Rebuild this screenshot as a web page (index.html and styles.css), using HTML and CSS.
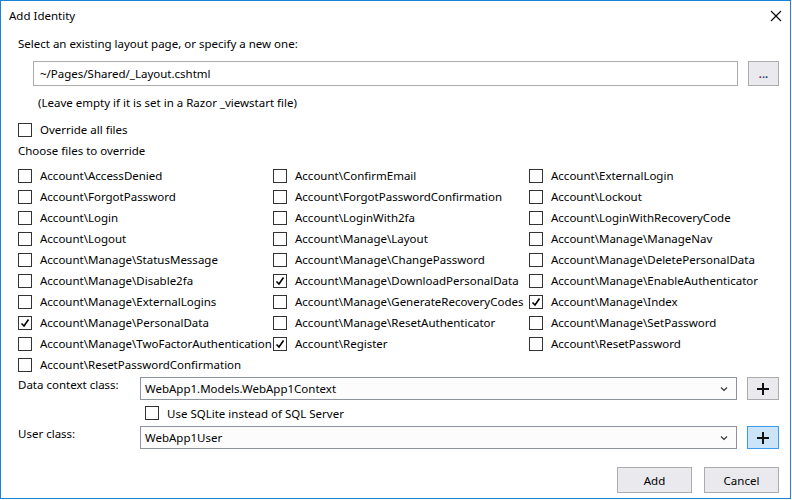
FILE: index.html
```html
<!DOCTYPE html>
<html>
<head>
<meta charset="utf-8">
<link rel="stylesheet" href="styles.css">
</head>
<body>
<div class="window">
  <div class="titlebar">
    <span class="title">Add Identity</span>
    <span class="close"><svg width="12" height="12" viewBox="0 0 12 12"><path d="M1 1 L11 11 M11 1 L1 11" stroke="#000" stroke-width="1.1" fill="none"/></svg></span>
  </div>
  <div class="content">
    <div class="label-line first">Select an existing layout page, or specify a new one:</div>
    <div class="layout-row">
      <div class="textbox">~/Pages/Shared/_Layout.cshtml</div>
      <div class="btn dots"><span class="d1">.</span><span class="d2">.</span><span class="d3">.</span></div>
    </div>
    <div class="hint">(Leave empty if it is set in a Razor _viewstart file)</div>
    <div class="check row21"><span class="box"></span><span class="ctext">Override all files</span></div>
    <div class="label-line row21">Choose files to override</div>
    <div class="grid">
      <div class="check"><span class="box"></span><span class="ctext">Account\AccessDenied</span></div>
      <div class="check"><span class="box"></span><span class="ctext">Account\ConfirmEmail</span></div>
      <div class="check"><span class="box"></span><span class="ctext">Account\ExternalLogin</span></div>
      <div class="check"><span class="box"></span><span class="ctext">Account\ForgotPassword</span></div>
      <div class="check"><span class="box"></span><span class="ctext">Account\ForgotPasswordConfirmation</span></div>
      <div class="check"><span class="box"></span><span class="ctext">Account\Lockout</span></div>
      <div class="check"><span class="box"></span><span class="ctext">Account\Login</span></div>
      <div class="check"><span class="box"></span><span class="ctext">Account\LoginWith2fa</span></div>
      <div class="check"><span class="box"></span><span class="ctext">Account\LoginWithRecoveryCode</span></div>
      <div class="check"><span class="box"></span><span class="ctext">Account\Logout</span></div>
      <div class="check"><span class="box"></span><span class="ctext">Account\Manage\Layout</span></div>
      <div class="check"><span class="box"></span><span class="ctext">Account\Manage\ManageNav</span></div>
      <div class="check"><span class="box"></span><span class="ctext">Account\Manage\StatusMessage</span></div>
      <div class="check"><span class="box"></span><span class="ctext">Account\Manage\ChangePassword</span></div>
      <div class="check"><span class="box"></span><span class="ctext">Account\Manage\DeletePersonalData</span></div>
      <div class="check"><span class="box"></span><span class="ctext">Account\Manage\Disable2fa</span></div>
      <div class="check"><span class="box checked"><svg width="12" height="12" viewBox="0 0 12 12"><path d="M2.5 6.5 L5 9 L9.5 2.5" stroke="#000" stroke-width="1.6" fill="none"/></svg></span><span class="ctext">Account\Manage\DownloadPersonalData</span></div>
      <div class="check"><span class="box"></span><span class="ctext">Account\Manage\EnableAuthenticator</span></div>
      <div class="check"><span class="box"></span><span class="ctext">Account\Manage\ExternalLogins</span></div>
      <div class="check"><span class="box"></span><span class="ctext">Account\Manage\GenerateRecoveryCodes</span></div>
      <div class="check"><span class="box checked"><svg width="12" height="12" viewBox="0 0 12 12"><path d="M2.5 6.5 L5 9 L9.5 2.5" stroke="#000" stroke-width="1.6" fill="none"/></svg></span><span class="ctext">Account\Manage\Index</span></div>
      <div class="check"><span class="box checked"><svg width="12" height="12" viewBox="0 0 12 12"><path d="M2.5 6.5 L5 9 L9.5 2.5" stroke="#000" stroke-width="1.6" fill="none"/></svg></span><span class="ctext">Account\Manage\PersonalData</span></div>
      <div class="check"><span class="box"></span><span class="ctext">Account\Manage\ResetAuthenticator</span></div>
      <div class="check"><span class="box"></span><span class="ctext">Account\Manage\SetPassword</span></div>
      <div class="check"><span class="box"></span><span class="ctext">Account\Manage\TwoFactorAuthentication</span></div>
      <div class="check"><span class="box checked"><svg width="12" height="12" viewBox="0 0 12 12"><path d="M2.5 6.5 L5 9 L9.5 2.5" stroke="#000" stroke-width="1.6" fill="none"/></svg></span><span class="ctext">Account\Register</span></div>
      <div class="check"><span class="box"></span><span class="ctext">Account\ResetPassword</span></div>
      <div class="check"><span class="box"></span><span class="ctext">Account\ResetPasswordConfirmation</span></div>
    </div>
    <div class="form-row ctx">
      <div class="flabel">Data context class:</div>
      <div class="combo"><span>WebApp1.Models.WebApp1Context</span><svg width="8" height="6" viewBox="0 0 8 6"><path d="M1 1.5 L4 4.5 L7 1.5" stroke="#333" stroke-width="1.2" fill="none"/></svg></div>
      <div class="btn plus"><svg width="12" height="12" viewBox="0 0 12 12"><path d="M6 0 V12 M0 6 H12" stroke="#111" stroke-width="2" fill="none"/></svg></div>
    </div>
    <div class="sqlite"><span class="box"></span><span class="ctext">Use SQLite instead of SQL Server</span></div>
    <div class="form-row user">
      <div class="flabel">User class:</div>
      <div class="combo"><span>WebApp1User</span><svg width="8" height="6" viewBox="0 0 8 6"><path d="M1 1.5 L4 4.5 L7 1.5" stroke="#333" stroke-width="1.2" fill="none"/></svg></div>
      <div class="btn plus hot"><svg width="12" height="12" viewBox="0 0 12 12"><path d="M6 0 V12 M0 6 H12" stroke="#111" stroke-width="2" fill="none"/></svg></div>
    </div>
    <div class="footer">
      <div class="btn action">Add</div>
      <div class="btn action">Cancel</div>
    </div>
  </div>
</div>
</body>
</html>
```
FILE: styles.css
```css
* { box-sizing: border-box; }
html, body { margin: 0; padding: 0; background: #fff; }
body {
  font-family: "Segoe UI", "Noto Sans", "Open Sans", sans-serif;
  font-size: 11.5px;
  color: #000;
}
.window {
  width: 791px;
  height: 499px;
  border: 1px solid #1883d7;
  background: #fff;
  display: flex;
  flex-direction: column;
}
.titlebar {
  height: 30px;
  display: flex;
  align-items: center;
  justify-content: space-between;
  padding-left: 8px;
  padding-right: 8px;
}
.title { line-height: 30px; }
.close { display: flex; align-items: center; }
.content {
  padding: 0 11px 0 17px;
  display: flex;
  flex-direction: column;
}
.label-line { line-height: 16px; }
.label-line.first { margin-top: 5px; }
.layout-row {
  display: flex;
  gap: 10px;
  margin-top: 9px;
  padding-left: 15px;
}
.textbox {
  flex: 1;
  height: 25px;
  border: 1px solid #ababab;
  padding-left: 6px;
  line-height: 23px;
}
.btn {
  background: #e9e9ee;
  border: 1px solid #acacac;
  display: flex;
  align-items: center;
  justify-content: center;
}
.dots { width: 31px; height: 25px; font-weight: bold; line-height: 1; }
.dots span { font-size: 11px; }
.d1 { color: #8a1b3a; }
.d2 { color: #1b5a8a; }
.d3 { color: #2a2a6a; }
.hint { line-height: 16px; margin-top: 9px; padding-left: 20px; }
.row21 { height: 21px; line-height: 21px; }
.check {
  display: flex;
  align-items: center;
  height: 21px;
  white-space: nowrap;
}
.check.row21 { margin-top: 8px; }
.box {
  flex: none;
  width: 14px;
  height: 14px;
  border: 1px solid #333;
  background: #fff;
  display: flex;
  align-items: center;
  justify-content: center;
  margin-right: 8px;
}
.grid {
  display: grid;
  grid-template-columns: 255px 256px 1fr;
  grid-auto-rows: 21px;
  margin-top: 4px;
}
.form-row {
  display: flex;
  align-items: flex-start;
}
.form-row.ctx { margin-top: 2px; }
.form-row.user { margin-top: 3px; }
.flabel { width: 122px; line-height: 16px; }
.combo {
  flex: 1;
  height: 23px;
  border: 1px solid #8c939c;
  background: #fcfcfc;
  display: flex;
  align-items: center;
  justify-content: space-between;
  padding: 0 8px 0 4px;
  margin-right: 10px;
}
.plus { width: 32px; height: 23px; }
.plus.hot { background: #cce4f7; border-color: #3d9be9; }
.sqlite {
  display: flex;
  align-items: center;
  height: 20px;
  margin-top: 3px;
  padding-left: 127px;
}
.footer {
  display: flex;
  justify-content: flex-end;
  gap: 12px;
  margin-top: 18px;
}
.action { width: 75px; height: 26px; }
```
